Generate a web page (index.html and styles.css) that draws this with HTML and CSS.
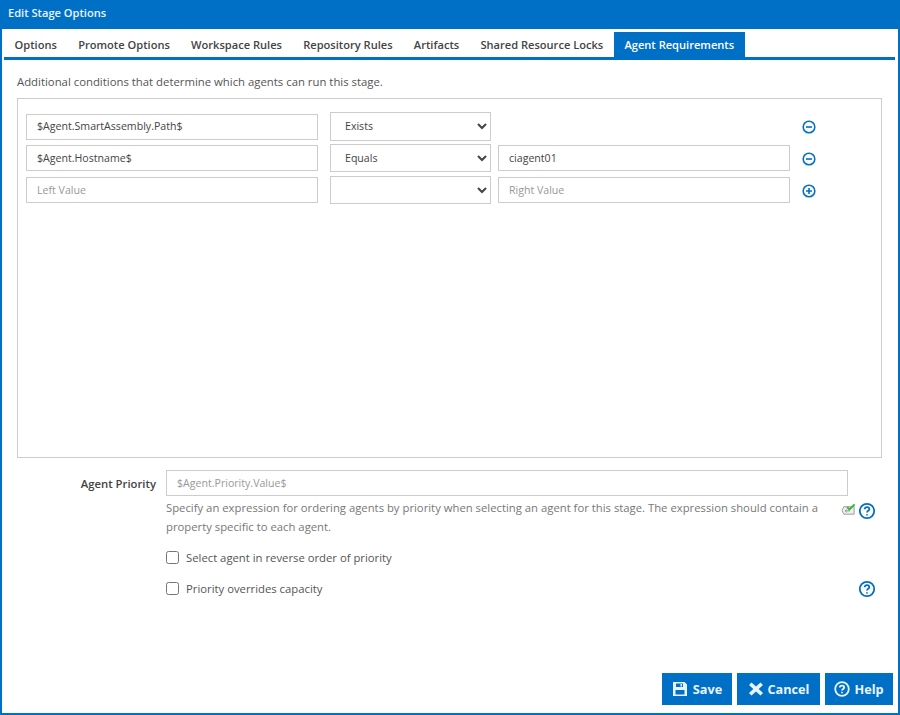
FILE: index.html
```html
<!DOCTYPE html>
<html lang="en">
<head>
<meta charset="utf-8">
<title>Edit Stage Options</title>
<link rel="stylesheet" href="styles.css">
</head>
<body>
<div class="dialog">
  <header class="titlebar">Edit Stage Options</header>
  <nav class="tabs">
    <a class="tab">Options</a>
    <a class="tab">Promote Options</a>
    <a class="tab">Workspace Rules</a>
    <a class="tab">Repository Rules</a>
    <a class="tab">Artifacts</a>
    <a class="tab">Shared Resource Locks</a>
    <a class="tab active">Agent Requirements</a>
  </nav>
  <main class="content">
    <p class="intro">Additional conditions that determine which agents can run this stage.</p>
    <section class="conditions">
      <div class="cond-row">
        <input class="field" type="text" value="$Agent.SmartAssembly.Path$">
        <select class="op tall"><option>Exists</option></select>
        <span class="spacer"></span>
        <svg class="round" viewBox="0 0 14 14"><circle cx="7" cy="7" r="5.800"/><path d="M4 7h6"/></svg>
      </div>
      <div class="cond-row">
        <input class="field" type="text" value="$Agent.Hostname$">
        <select class="op"><option>Equals</option></select>
        <input class="field" type="text" value="ciagent01">
        <svg class="round" viewBox="0 0 14 14"><circle cx="7" cy="7" r="5.800"/><path d="M4 7h6"/></svg>
      </div>
      <div class="cond-row">
        <input class="field" type="text" placeholder="Left Value">
        <select class="op"><option></option></select>
        <input class="field" type="text" placeholder="Right Value">
        <svg class="round" viewBox="0 0 14 14"><circle cx="7" cy="7" r="5.800"/><path d="M4 7h6M7 4v6"/></svg>
      </div>
    </section>
    <section class="priority">
      <label class="prio-label">Agent Priority</label>
      <div class="prio-main">
        <input class="field wide" type="text" placeholder="$Agent.Priority.Value$">
        <p class="hint">Specify an expression for ordering agents by priority when selecting an agent for this stage. The expression should contain a property specific to each agent.</p>
        <label class="check first"><input type="checkbox"><span>Select agent in reverse order of priority</span></label>
        <label class="check"><input type="checkbox"><span>Priority overrides capacity</span></label>
      </div>
      <div class="prio-side">
        <div class="side-top">
          <svg class="expr" viewBox="0 0 16 13">
            <path class="expr-box" d="M3 3.500h11v8H3L1 7.500z"/>
            <path class="expr-mark" d="M4.500 8h5M4.500 8l1.500-1.400M4.500 8l1.500 1.400"/>
            <path class="expr-check" d="M6.500 4l2.500 2.500L14.500 1"/>
          </svg>
          <svg class="help" viewBox="0 0 18 18"><circle cx="9" cy="9" r="7.200"/><path d="M6.700 7.200C6.700 5.900 7.700 5.200 9 5.200s2.300.8 2.300 2c0 1.700-2.300 1.600-2.300 3.300"/><path d="M9 12.200v1.400"/></svg>
        </div>
        <svg class="help lower" viewBox="0 0 18 18"><circle cx="9" cy="9" r="7.200"/><path d="M6.700 7.200C6.700 5.900 7.700 5.200 9 5.200s2.300.8 2.300 2c0 1.700-2.300 1.600-2.300 3.300"/><path d="M9 12.200v1.400"/></svg>
      </div>
    </section>
  </main>
  <footer class="actions">
    <button class="btn save" type="button">
      <svg class="btn-icon" viewBox="0 0 16 16"><path fill-rule="evenodd" d="M1 1h11.500L15 3.500V15H1zM4 2.500V6h7V2.500zM3.500 9v4.500h9V9z"/><path d="M8.500 3h1.500v2.500H8.500z"/></svg>Save
    </button>
    <button class="btn cancel" type="button">
      <svg class="btn-icon" viewBox="0 0 16 16"><path d="M3.500 1.500L8 5.500l4.500-4L15 4l-4.300 4L15 12l-2.500 2.500L8 10.500l-4.500 4L1 12l4.300-4L1 4z"/></svg>Cancel
    </button>
    <button class="btn helpbtn" type="button">
      <svg class="btn-icon outline" viewBox="0 0 16 16"><circle cx="8" cy="8" r="6.800"/><path d="M5.800 6.500C5.800 5.200 6.800 4.600 8 4.600s2.200.7 2.200 1.800c0 1.600-2.200 1.500-2.200 3.100"/><path d="M8 10.800v1.400"/></svg>Help
    </button>
  </footer>
</div>
</body>
</html>
```
FILE: styles.css
```css
* { box-sizing: border-box; }
html, body { margin: 0; height: 100%; }
body {
  font-family: "Open Sans", "Noto Sans", "Liberation Sans", sans-serif;
  font-size: 11.300px;
  color: #444;
  background: #fff;
}
.dialog {
  width: 900px;
  height: 715px;
  display: flex;
  flex-direction: column;
  border: 2px solid #0070c6;
  border-top: 0;
  background: #fff;
}
.titlebar {
  height: 29px;
  margin: 0 -2px;
  padding: 5px 8px 0;
  background: #0070c6;
  color: #e8f4fc;
  font-weight: 600;
  font-size: 11.100px;
  line-height: 15px;
}
.tabs {
  display: flex;
  height: 31px;
  margin: 0 3px 0 2px;
  padding-top: 3px;
  border-bottom: 3px solid #0070c6;
}
.tab {
  padding: 0 10.600px;
  line-height: 25px;
  font-weight: 600;
  font-size: 11.100px;
  color: #444;
  white-space: nowrap;
}
.tab.active { background: #0070c6; color: #fff; }
.content { flex: 1; padding: 0 16px 0 15px; display: flex; flex-direction: column; }
.intro { margin: 13px 0 8px; line-height: 17px; font-size: 11.350px; color: #555; }
.conditions {
  height: 360px;
  border: 1px solid #ccc;
  padding: 13px 8px 0;
}
.cond-row {
  display: grid;
  grid-template-columns: 292px 161px 292px 14px;
  column-gap: 12px;
  align-items: center;
  height: 28px;
  margin-bottom: 4px;
}
.cond-row > .spacer { display: block; }
.cond-row > input:nth-child(3), .cond-row > .spacer { margin-left: -5px; }
.cond-row > svg { margin: 1px 0 0 -5px; }
.field {
  height: 26px;
  width: 100%;
  border: 1px solid #ccc;
  padding: 0 10px 1px;
  font: 10.600px "Open Sans", "Noto Sans", sans-serif;
  color: #444;
  background: #fff;
  outline: 0;
  border-radius: 0;
}
.field::placeholder { color: #999; opacity: 1; }
.op {
  height: 28px;
  width: 161px;
  border: 1px solid #ccc;
  border-radius: 0;
  padding: 0 10px 1px;
  font: 10.600px "Open Sans", "Noto Sans", sans-serif;
  color: #444;
  background: #fff;
}
.op.tall { height: 29px; align-self: start; }
.round { width: 14px; height: 14px; fill: none; stroke: #0070c6; stroke-width: 1.600; }
.priority {
  display: flex;
  margin-top: 12px;
}
.prio-label {
  width: 139px;
  flex: none;
  text-align: right;
  font-weight: 600;
  line-height: 28px;
  color: #444;
}
.prio-main { width: 682px; flex: none; margin-left: 10px; }
.wide { display: block; }
.hint {
  margin: 2px 0 0;
  line-height: 19px;
  color: #777;
}
.check { display: flex; align-items: center; height: 19px; color: #555; }
.check.first { margin-top: 12px; }
.check + .check { margin-top: 12px; }
.check input { width: 13px; height: 13px; margin: 0 7px 0 0; }
.prio-side { padding-top: 32px; width: 34px; flex: none; }
.side-top { display: flex; align-items: flex-start; gap: 2px; margin-left: -7px; }
.expr { width: 15px; height: 13px; margin-top: 1px; flex: none; }
.expr-box { fill: #eee; stroke: #999; stroke-width: 1; }
.expr-mark { fill: none; stroke: #777; stroke-width: .8; }
.expr-check { fill: none; stroke: #2eb82e; stroke-width: 2; }
.help { width: 18px; height: 18px; fill: none; stroke: #0070c6; stroke-width: 1.800; display: block; flex: none; }
.lower { margin: 60px 0 0 10px; }
.actions {
  display: flex;
  justify-content: flex-end;
  gap: 5px;
  padding: 0 5px 8px 0;
}
.btn {
  height: 32px;
  border: 0;
  background: #0070c6;
  color: #e8f4fc;
  font: 700 12.700px "Open Sans", "Noto Sans", sans-serif;
  display: flex;
  align-items: center;
  justify-content: center;
  gap: 4px;
  padding: 0;
}
.save { width: 70px; gap: 5px; }
.cancel { width: 83px; }
.helpbtn { width: 68px; }
.btn-icon { width: 16px; height: 16px; fill: #e8f4fc; }
.btn-icon.outline { fill: none; stroke: #e8f4fc; stroke-width: 1.800; }
```
